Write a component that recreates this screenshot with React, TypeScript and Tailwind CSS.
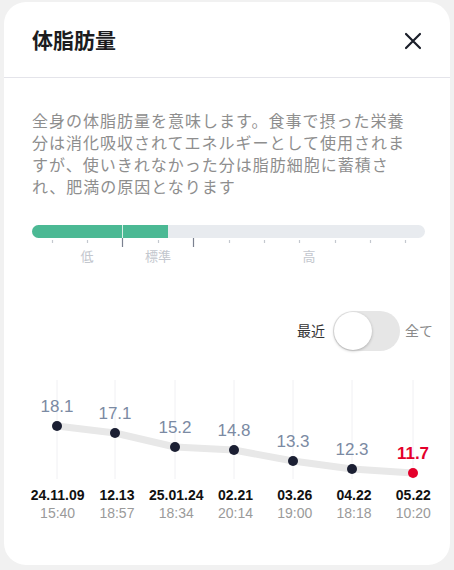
import React from "react";

const font = { fontFamily: '"Liberation Sans", "Noto Sans CJK JP", sans-serif' };

const points = [
  { x: 29, y: 46, v: "18.1", date: "24.11.09", time: "15:40" },
  { x: 87, y: 53, v: "17.1", date: "12.13", time: "18:57" },
  { x: 147, y: 67, v: "15.2", date: "25.01.24", time: "18:34" },
  { x: 206, y: 70, v: "14.8", date: "02.21", time: "20:14" },
  { x: 265, y: 81, v: "13.3", date: "03.26", time: "19:00" },
  { x: 324, y: 89, v: "12.3", date: "04.22", time: "18:18" },
  { x: 385, y: 93, v: "11.7", date: "05.22", time: "10:20" },
];

const ticks = [20, 55, 90, 126, 161, 197, 232, 267, 303, 338, 373];

function Gauge() {
  return (
    <div className="mt-[26px] w-[393px]">
      <div className="relative flex h-[13px] w-full overflow-hidden rounded-full bg-[#e8ebef]">
        <div className="h-full w-[90px] bg-[#4bb994]" />
        <div className="h-full w-px bg-[#d9f0e6]" />
        <div className="h-full w-[45px] bg-[#4bb994]" />
      </div>
      <svg width="393" height="10" className="block">
        {ticks.map((t) => {
          const major = t === 90 || t === 161;
          return (
            <line
              key={t}
              x1={t + 0.5}
              x2={t + 0.5}
              y1={major ? 0 : 2}
              y2={major ? 9 : 5}
              stroke={major ? "#7b8190" : "#c4c8cf"}
              strokeWidth={1.2}
            />
          );
        })}
      </svg>
      <div className="mt-px flex text-[13px] leading-[16px] text-[#c3c7ce]">
        <span className="w-[20px]" />
        <span className="w-[70px] text-center">低</span>
        <span className="w-[72px] text-center">標準</span>
        <span className="w-[230px] text-center">高</span>
      </div>
    </div>
  );
}

function Chart() {
  const path = points.map((p, i) => `${i === 0 ? "M" : "L"}${p.x} ${p.y}`).join(" ");
  return (
    <div className="ml-[24px] mt-[29px] w-[415px]">
      <svg width="415" height="100" className="block">
        {points.map((p) => (
          <line key={p.x} x1={p.x} x2={p.x} y1={0} y2={99} stroke="#f0f0f3" strokeWidth={1} />
        ))}
        <path d={path} fill="none" stroke="#e8e8e8" strokeWidth={7} strokeLinejoin="round" strokeLinecap="round" />
        {points.map((p, i) => {
          const last = i === points.length - 1;
          return (
            <g key={p.v}>
              <circle cx={p.x} cy={p.y} r={5} fill={last ? "#e4002b" : "#1b1f33"} />
              <text
                x={p.x}
                y={p.y - 14}
                textAnchor="middle"
                fill={last ? "#e4002b" : "#7b8aa3"}
                style={{ ...font, fontSize: 17, fontWeight: last ? 700 : 400 }}
              >
                {p.v}
              </text>
            </g>
          );
        })}
      </svg>
      <div className="mt-[6px] grid grid-cols-7">
        {points.map((p) => (
          <div key={p.date} className="flex flex-col items-center">
            <span className="text-[14px] font-bold leading-[18px] text-[#111]">{p.date}</span>
            <span className="text-[14px] leading-[18px] text-[#9a9a9a]">{p.time}</span>
          </div>
        ))}
      </div>
    </div>
  );
}

export default function App() {
  return (
    <div className="h-[570px] w-[454px] bg-[#f1f1f1] pt-[2px]" style={font}>
      <div className="mx-[4px] h-[563px] w-[446px] overflow-hidden rounded-[22px] bg-white">
        <div className="flex h-[76px] items-center justify-between border-b border-[#e4e4ea] pl-[28px] pr-[28px]">
          <h1 className="pt-[2px] text-[21px] font-semibold text-[#1c1c1e]">体脂肪量</h1>
          <svg width="18" height="18" viewBox="0 0 18 18" className="mt-[2px]">
            <path d="M2 2 L16 16 M16 2 L2 16" stroke="#1b1f2a" strokeWidth={2.2} strokeLinecap="round" />
          </svg>
        </div>

        <div className="pl-[28px] pt-[33px]">
          <p className="text-[16px] leading-[22px] tracking-[1px] text-[#8e8e8e]">
            全身の体脂肪量を意味します。食事で摂った栄養
            <br />
            分は消化吸収されてエネルギーとして使用されま
            <br />
            すが、使いきれなかった分は脂肪細胞に蓄積さ
            <br />
            れ、肥満の原因となります
          </p>
          <Gauge />
        </div>

        <div className="mt-[46px] flex items-center justify-end pr-[17px]">
          <span className="text-[14px] text-[#333]">最近</span>
          <div className="ml-[8px] flex h-[40px] w-[67px] items-center rounded-full bg-[#e6e6e6] px-[1px]">
            <div className="h-[38px] w-[38px] rounded-full bg-white shadow-[0_1px_3px_rgba(0,0,0,0.25)]" />
          </div>
          <span className="ml-[5px] text-[14px] text-[#8a8a8a]">全て</span>
        </div>

        <Chart />
      </div>
    </div>
  );
}
